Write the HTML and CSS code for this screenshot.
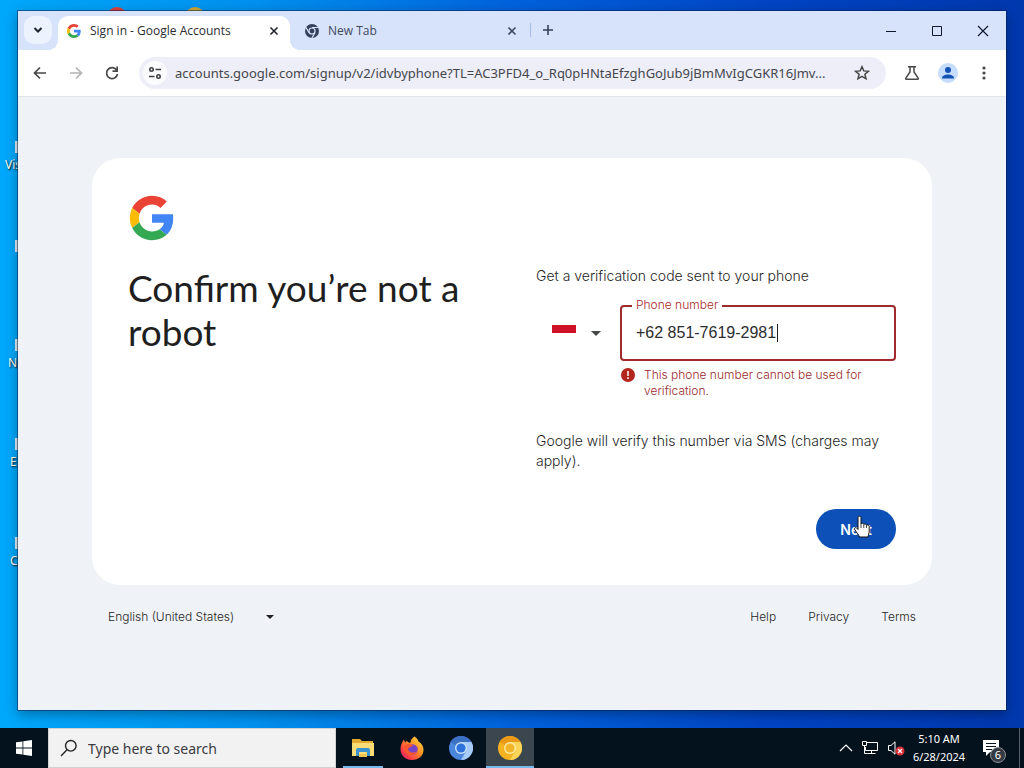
FILE: index.html
```html
<!DOCTYPE html>
<html lang="en">
<head>
  <meta charset="UTF-8">
  <title>Sign in - Google Accounts</title>
  <link rel="stylesheet" href="styles.css">
</head>
<body>

  <!-- Desktop -->
  <div class="desktop">
    <div class="pin pin-red"></div>
    <div class="pin pin-yellow"></div>
    <div class="pin shortcut shortcut-1">Vis</div>
    <div class="pin shortcut shortcut-2"></div>
    <div class="pin shortcut shortcut-3">N</div>
    <div class="pin shortcut shortcut-4">E</div>
    <div class="pin shortcut shortcut-5">C</div>

    <!-- Browser window -->
    <div class="window">
      <div class="tabstrip">
        <button class="tab-search" aria-label="Search tabs">
          <svg width="10" height="10" viewBox="0 0 10 10"><path d="M1.500 3l3.500 3.500L8.500 3" fill="none" stroke="#20242c" stroke-width="2"/></svg>
        </button>
        <div class="tab active">
          <svg width="14" height="14" viewBox="0 0 48 48">
            <path fill="#ea4335" d="M24 9.500c3.540 0 6.710 1.220 9.210 3.600l6.850-6.850C35.900 2.380 30.470 0 24 0 14.620 0 6.510 5.380 2.560 13.220l7.980 6.190C12.430 13.720 17.740 9.500 24 9.500z"/>
            <path fill="#4285f4" d="M46.980 24.550c0-1.570-.15-3.090-.38-4.550H24v9.020h12.940c-.58 2.960-2.260 5.480-4.780 7.180l7.730 6c4.510-4.180 7.090-10.360 7.090-17.650z"/>
            <path fill="#fbbc05" d="M10.530 28.590c-.48-1.450-.76-2.990-.76-4.590s.27-3.140.76-4.590l-7.980-6.190C.92 16.460 0 20.120 0 24c0 3.880.92 7.540 2.560 10.780l7.970-6.190z"/>
            <path fill="#34a853" d="M24 48c6.480 0 11.930-2.130 15.890-5.810l-7.730-6c-2.150 1.450-4.920 2.300-8.160 2.300-6.260 0-11.570-4.220-13.470-9.910l-7.980 6.190C6.510 42.620 14.620 48 24 48z"/>
          </svg>
          <span class="tab-title">Sign in - Google Accounts</span>
          <button class="tab-close" aria-label="Close tab">
            <svg width="10" height="10" viewBox="0 0 10 10"><path d="M1.500 1.500l7 7M8.500 1.500l-7 7" stroke="#20242c" stroke-width="1.600"/></svg>
          </button>
        </div>
        <div class="tab">
          <svg width="14" height="14" viewBox="0 0 24 24">
            <circle cx="12" cy="12" r="12" fill="#35415c"/>
            <circle cx="12" cy="12" r="5.200" fill="#35415c" stroke="#d8e3fb" stroke-width="2"/>
            <path d="M12 6h11M6.800 15L1.500 5.500M17.200 15l-5.500 9" stroke="#d8e3fb" stroke-width="2"/>
          </svg>
          <span class="tab-title">New Tab</span>
          <button class="tab-close" aria-label="Close tab">
            <svg width="10" height="10" viewBox="0 0 10 10"><path d="M1.500 1.500l7 7M8.500 1.500l-7 7" stroke="#3c475e" stroke-width="1.600"/></svg>
          </button>
        </div>
        <button class="new-tab" aria-label="New tab">
          <svg width="12" height="12" viewBox="0 0 12 12"><path d="M6 1v10M1 6h10" stroke="#35415c" stroke-width="1.600"/></svg>
        </button>
        <div class="window-buttons">
          <button aria-label="Minimize"><svg width="12" height="12" viewBox="0 0 12 12"><path d="M1 6.500h10" stroke="#10182c"/></svg></button>
          <button aria-label="Maximize"><svg width="12" height="12" viewBox="0 0 12 12"><path d="M1.500 1.500h9v9h-9z" fill="none" stroke="#10182c"/></svg></button>
          <button aria-label="Close"><svg width="12" height="12" viewBox="0 0 12 12"><path d="M1 1l10 10M11 1L1 11" stroke="#10182c" stroke-width="1.200"/></svg></button>
        </div>
      </div>

      <div class="toolbar">
        <button class="tool" aria-label="Back">
          <svg width="16" height="16" viewBox="0 0 16 16"><path d="M14 8H3M8 2.500L2.500 8 8 13.500" fill="none" stroke="#474747" stroke-width="1.700"/></svg>
        </button>
        <button class="tool" aria-label="Forward">
          <svg width="16" height="16" viewBox="0 0 16 16"><path d="M2 8h11M8 2.500L13.500 8 8 13.500" fill="none" stroke="#b4b4b6" stroke-width="1.700"/></svg>
        </button>
        <button class="tool" aria-label="Reload">
          <svg width="16" height="16" viewBox="0 0 16 16"><path d="M12.800 5.200A5.500 5.500 0 1 0 13.500 9" fill="none" stroke="#474747" stroke-width="1.700"/><path d="M14 1.500V7H8.500V5.300h3.800V1.500z" fill="#474747"/></svg>
        </button>
        <div class="omnibox">
          <button class="site-info" aria-label="View site information">
            <svg width="14" height="14" viewBox="0 0 14 14" fill="none" stroke="#3c3f43" stroke-width="1.600"><circle cx="3.500" cy="3.500" r="1.700"/><path d="M7.500 3.500H13M1 10.500h5.500"/><circle cx="10.500" cy="10.500" r="1.700"/></svg>
          </button>
          <input type="text" class="url" aria-label="Address and search bar" value="accounts.google.com/signup/v2/idvbyphone?TL=AC3PFD4_o_Rq0pHNtaEfzghGoJub9jBmMvIgCGKR16Jmv..." readonly>
          <button class="tool" aria-label="Bookmark this tab">
            <svg width="16" height="16" viewBox="0 0 16 16"><path d="M8 1.700l1.800 4.200 4.600.4-3.500 3 1.100 4.500-4-2.400-4 2.400 1.100-4.500-3.500-3 4.600-.4z" fill="none" stroke="#474747" stroke-width="1.500"/></svg>
          </button>
        </div>
        <button class="tool" aria-label="Experiments">
          <svg width="16" height="16" viewBox="0 0 16 16"><path d="M4 1.800h8M6 2v5L1.800 13.200c-.3.500 0 1 .5 1h11.400c.5 0 .8-.5.5-1L10 7V2" fill="none" stroke="#474747" stroke-width="1.500"/></svg>
        </button>
        <button class="tool" aria-label="Profile">
          <svg width="20" height="20" viewBox="0 0 20 20"><circle cx="10" cy="10" r="10" fill="#c5dcfb"/><circle cx="10" cy="7" r="3" fill="#1451b4"/><path d="M4 15.500c0-3 3-4 6-4s6 1 6 4z" fill="#1451b4"/></svg>
        </button>
        <button class="tool" aria-label="Menu">
          <svg width="16" height="16" viewBox="0 0 16 16" fill="#474747"><circle cx="8" cy="3" r="1.600"/><circle cx="8" cy="8" r="1.600"/><circle cx="8" cy="13" r="1.600"/></svg>
        </button>
      </div>

      <!-- Google sign up page -->
      <div class="page">
        <form class="card">
          <div class="intro">
            <svg class="logo" width="48" height="48" viewBox="-2 -2 52 52">
              <path fill="#ea4335" d="M24 9.500c3.540 0 6.710 1.220 9.210 3.600l6.850-6.850C35.900 2.380 30.470 0 24 0 14.620 0 6.510 5.380 2.560 13.220l7.980 6.190C12.430 13.720 17.740 9.500 24 9.500z"/>
              <path fill="#4285f4" d="M46.980 24.550c0-1.570-.15-3.090-.38-4.550H24v9.020h12.940c-.58 2.960-2.260 5.480-4.780 7.180l7.730 6c4.510-4.180 7.090-10.360 7.090-17.650z"/>
              <path fill="#fbbc05" d="M10.530 28.590c-.48-1.450-.76-2.990-.76-4.590s.27-3.140.76-4.590l-7.980-6.190C.92 16.460 0 20.120 0 24c0 3.880.92 7.540 2.560 10.780l7.970-6.190z"/>
              <path fill="#34a853" d="M24 48c6.480 0 11.930-2.130 15.890-5.810l-7.730-6c-2.150 1.450-4.920 2.300-8.160 2.300-6.260 0-11.570-4.220-13.470-9.910l-7.980 6.190C6.510 42.620 14.620 48 24 48z"/>
            </svg>
            <h1>Confirm you’re not a robot</h1>
          </div>
          <div class="details">
            <p class="lead">Get a verification code sent to your phone</p>
            <div class="phone-row">
              <div class="country">
                <select aria-label="Country">
                  <option>Indonesia</option>
                </select>
                <svg class="flag" width="24" height="16" viewBox="0 0 24 16"><path d="M0 0h24v16H0z" fill="#fff"/><path d="M0 0h24v8H0z" fill="#ce1126"/></svg>
                <svg class="arrow" width="10" height="5" viewBox="0 0 10 5"><path d="M0 0h10L5 5z" fill="#444746"/></svg>
              </div>
              <div class="phone">
                <div class="phone-box">
                  <label for="phone">Phone number</label>
                  <input type="tel" id="phone" value="+62 851-7619-2981">
                  <span class="caret"></span>
                </div>
                <div class="error">
                  <svg width="16" height="16" viewBox="0 0 16 16"><circle cx="8" cy="8" r="7" fill="#b3261e"/><path d="M8 4v5M8 10.300v1.700" stroke="#fff" stroke-width="1.500"/></svg>
                  <span>This phone number cannot be used for verification.</span>
                </div>
              </div>
            </div>
            <p class="note">Google will verify this number via SMS (charges may apply).</p>
            <button type="button" class="btn-next">Next</button>
          </div>
        </form>

        <div class="footer">
          <div class="language">
            <select aria-label="Language">
              <option>English (United States)</option>
            </select>
            <svg class="arrow" width="8" height="4" viewBox="0 0 8 4"><path d="M0 0h8L4 4z" fill="#1f1f1f"/></svg>
          </div>
          <div class="links">
            <a href="#">Help</a>
            <a href="#">Privacy</a>
            <a href="#">Terms</a>
          </div>
        </div>
      </div>
    </div>

    <!-- Mouse pointer -->
    <svg class="cursor" width="18" height="24" viewBox="0 0 18 24"><path d="M5 2.500C5 .8 8 .8 8 2.500V9c.3-1.200 2.700-1 2.800.5.500-1 2.600-.7 2.700.8.600-.8 2.700-.5 2.700 1.200V17c0 2-1.200 3-1.200 5H6.500c-.5-2-3-4.500-4.800-7.500-.8-1.500 1-2.500 2-1.500L5 14.500z" fill="#fff" stroke="#111" stroke-width="1"/><path d="M8 9v4M10.800 10v3M13.500 10.500V13" stroke="#111" stroke-width=".8"/></svg>
  </div>

  <!-- Taskbar -->
  <div class="taskbar">
    <button class="start" aria-label="Start">
      <svg width="16" height="16" viewBox="0 0 16 16" fill="#fff"><path d="M0 2.300L6.500 1.400v6.200H0zM7.300 1.300L16 0v7.600H7.300zM0 8.400h6.500v6.200L0 13.700zM7.300 8.400H16V16l-8.700-1.300z"/></svg>
    </button>
    <div class="search">
      <svg width="18" height="18" viewBox="0 0 18 18" fill="none" stroke="#222" stroke-width="1.400"><circle cx="10.800" cy="6.800" r="5.300"/><path d="M7 10.800L1 17"/></svg>
      <input type="text" aria-label="Search" placeholder="Type here to search">
    </div>
    <div class="apps">
      <button class="app open" aria-label="File Explorer">
        <svg width="24" height="24" viewBox="0 0 24 24"><path d="M1 3h8l2 2h11v15H1z" fill="#e3ab2f"/><path d="M1 7h22v13H1z" fill="#fbdc77"/><path d="M5 20v-6q0-2 2-2h10q2 0 2 2v6h-3v-4H8v4z" fill="#3b94cf"/><path d="M8 18h8v3H8z" fill="#f0c453"/></svg>
      </button>
      <button class="app" aria-label="Firefox">
        <svg width="24" height="24" viewBox="0 0 24 24">
          <defs><linearGradient id="fox" x1="1" y1="0" x2="0" y2="1"><stop offset="0" stop-color="#ffe94a"/><stop offset=".4" stop-color="#ff9524"/><stop offset=".75" stop-color="#fb3c48"/><stop offset="1" stop-color="#dd1d7b"/></linearGradient></defs>
          <path d="M14.500.5c3 2 3.500 3.700 4 5 3 1.500 5 5 5 8.300C23.500 20 18.500 24 12 24S.5 19.500.5 13C.5 9.500 2 6 4 3.500L5 6.500l2-1.800c.5 1.500 1.800 2 3.500 2 0-2.700 1.500-4.700 4-6.200z" fill="url(#fox)"/>
          <circle cx="12.500" cy="13.500" r="5.200" fill="#7744c9"/><path d="M4 10c3-3 7-2.500 9.500 0-2.500 0-3.500 1.500-5.500 2.500.5 4 5 5.500 9 2.500-1.500 5-9.500 6-12.500 0-1-2-1-3.500-.5-5z" fill="#f9572e"/>
        </svg>
      </button>
      <button class="app" aria-label="Chromium">
        <svg width="24" height="24" viewBox="0 0 24 24"><circle cx="12" cy="12" r="12" fill="#4a86dc"/><path d="M12 6h10.400A12 12 0 0 1 12 24l5.200-9z" fill="#a7cbfa"/><path d="M1.600 6A12 12 0 0 1 22.400 6H12l-5.200 3z" fill="#3b70c4"/><circle cx="12" cy="12" r="6" fill="#c9dffc"/><circle cx="12" cy="12" r="4.600" fill="#2e72dc"/></svg>
      </button>
      <button class="app open current" aria-label="Chrome Canary">
        <svg width="24" height="24" viewBox="0 0 24 24"><circle cx="12" cy="12" r="12" fill="#f5b321"/><path d="M12 6h10.400A12 12 0 0 1 12 24l5.200-9z" fill="#fbd557"/><path d="M1.600 6A12 12 0 0 1 22.400 6H12l-5.200 3z" fill="#ea9a17"/><circle cx="12" cy="12" r="6" fill="#fdeaa5"/><circle cx="12" cy="12" r="4.600" fill="#f2b52a"/></svg>
      </button>
    </div>
    <div class="tray">
      <svg width="14" height="14" viewBox="0 0 14 14"><path d="M1 10l6-6 6 6" fill="none" stroke="#fff" stroke-width="1.200"/></svg>
      <svg width="18" height="16" viewBox="0 0 18 16" fill="none" stroke="#fff"><path d="M5.500 2.500h11v8H4.500V7M10.500 10.500v3M6.500 13.500h8M1.500 1.500h4v4h-4zM3.500 5.500v8h3"/></svg>
      <svg width="18" height="16" viewBox="0 0 18 16"><path d="M1.500 5.500H4l4-3.700v12.400l-4-3.700H1.500z" fill="none" stroke="#fff"/><circle cx="13" cy="11" r="4.500" fill="#d93036"/><path d="M11 9l4 4M15 9l-4 4" stroke="#fff" stroke-width="1.200"/></svg>
      <div class="clock">
        <span>5:10 AM</span>
        <span>6/28/2024</span>
      </div>
      <div class="notifications">
        <svg width="16" height="16" viewBox="0 0 16 16"><path d="M0 0h16v12H7l-4 4v-4H0z" fill="#fff"/><path d="M3 3.500h10M3 6.500h10M3 9.500h6" stroke="#0a1320"/></svg>
        <span class="badge">6</span>
      </div>
      <div class="show-desktop"></div>
    </div>
  </div>

</body>
</html>
```
FILE: styles.css
```css
* {
  box-sizing: border-box;
}
body {
  font-family: Inter, Arial, sans-serif;
  display: flex;
  flex-direction: column;
  min-height: 100vh;
  margin: 0;
  color: #1f1f1f;
}
button {
  display: flex;
  align-items: center;
  justify-content: center;
  padding: 0;
  border: none;
  background: none;
  cursor: pointer;
}
input, select {
  border: none;
  outline: none;
  background: none;
  font-family: inherit;
}
svg {
  display: block;
  flex-shrink: 0;
}

/* Desktop */
.desktop {
  position: relative;
  flex: 1;
  display: flex;
  padding: 11px 18px 18px;
  background: linear-gradient(to right, #00a8fb, #0090ee 25%, #0062dc 50%, #0044c4 75%, #0038ae);
  overflow: hidden;
}
.pin {
  position: absolute;
}
.pin-red, .pin-yellow {
  top: 7px;
  left: 107px;
  width: 20px;
  height: 20px;
  border-radius: 50%;
  background: #e0403c;
}
.pin-yellow {
  left: 185px;
  background: #d0a437;
}
.shortcut {
  left: 8px;
  width: 40px;
  height: 32px;
  padding-top: 16px;
  font-family: "Noto Sans", sans-serif;
  font-size: 12px;
  line-height: 16px;
  color: #fff;
  text-shadow: 1px 1px 2px #000;
}
.shortcut::before {
  content: "";
  position: absolute;
  top: 0;
  left: 7px;
  width: 8px;
  height: 12px;
  background: #e4eef6;
}
.shortcut-1 {
  top: 141px;
  left: 5px;
}
.shortcut-1::before {
  left: 10px;
}
.shortcut-2 {
  top: 240px;
}
.shortcut-3 {
  top: 339px;
}
.shortcut-4 {
  top: 438px;
  left: 10px;
}
.shortcut-5 {
  top: 537px;
  left: 10px;
}
.shortcut-4::before, .shortcut-5::before {
  left: 5px;
}

/* Browser window */
.window {
  position: relative;
  flex: 1;
  display: flex;
  flex-direction: column;
  min-width: 0;
  background: #fff;
  box-shadow: 0 0 0 1px rgba(0, 30, 70, 0.5), 0 4px 12px rgba(0, 0, 0, 0.35);
  font-family: "Open Sans", sans-serif;
}
.tabstrip {
  display: flex;
  height: 39px;
  padding-left: 6px;
  background: #d7e3fb;
}
.tab-search {
  width: 28px;
  height: 28px;
  margin: 5px 6px 0 0;
  border-radius: 10px;
  background: #ecf2fe;
}
.tab {
  position: relative;
  display: flex;
  align-items: center;
  gap: 9px;
  width: 232px;
  height: 34px;
  margin-top: 5px;
  padding: 0 11px 5px 9px;
  font-size: 12px;
  color: #3f4a60;
}
.tab + .tab {
  width: 241px;
  padding-left: 15px;
  padding-right: 14px;
}
.tab + .tab::after {
  content: "";
  position: absolute;
  right: 0;
  top: 7px;
  width: 1px;
  height: 14px;
  background: #a5bce8;
}
.tab.active {
  border-radius: 10px 10px 0 0;
  background: #fff;
  color: #2a2d33;
}
.tab.active::before, .tab.active::after {
  content: "";
  position: absolute;
  bottom: 0;
  width: 10px;
  height: 10px;
}
.tab.active::before {
  left: -10px;
  background: radial-gradient(circle at 0 0, transparent 10px, #fff 10px);
}
.tab.active::after {
  right: -10px;
  background: radial-gradient(circle at 100% 0, transparent 10px, #fff 10px);
}
.tab-title {
  flex: 1;
  white-space: nowrap;
}
.new-tab {
  width: 28px;
  height: 28px;
  margin: 5px 0 0 3px;
}
.window-buttons {
  display: flex;
  margin-left: auto;
}
.window-buttons button {
  width: 46px;
}

.toolbar {
  display: flex;
  align-items: center;
  gap: 8px;
  height: 47px;
  padding: 0 8px;
  border-bottom: 1px solid #e2e5ea;
}
.tool {
  width: 28px;
  height: 28px;
  flex-shrink: 0;
}
.omnibox {
  flex: 1;
  display: flex;
  align-items: center;
  min-width: 0;
  height: 32px;
  margin: 0 4px 0 5px;
  padding: 0 10px 0 4px;
  border-radius: 16px;
  background: #eeeef8;
}
.site-info {
  width: 24px;
  height: 24px;
  border-radius: 50%;
  background: #fcfcff;
}
.url {
  flex: 1;
  min-width: 0;
  padding: 0 0 0 8px;
  font-family: "Noto Sans", sans-serif;
  font-size: 13px;
  color: #44474c;
}

/* Sign up page */
.page {
  flex: 1;
  padding: 61px 40px 40px;
  background: #eff3f8;
  font-family: Inter, Arial, sans-serif;
}
.card {
  display: grid;
  grid-template-columns: 1fr 1fr;
  gap: 48px;
  max-width: 840px;
  margin: 0 auto;
  padding: 36px;
  border-radius: 28px;
  background: #fff;
}
h1 {
  margin: 24px 0 0;
  font-family: Lato, sans-serif;
  font-size: 37px;
  font-weight: 400;
  line-height: 44px;
}
.details {
  display: flex;
  flex-direction: column;
  padding-top: 72px;
}
.lead, .note {
  margin: 0;
  font-size: 14px;
  font-weight: 300;
  line-height: 20px;
  color: #1f1f1f;
}
.phone-row {
  display: flex;
  gap: 8px;
  margin: 19px 0 32px;
}
.country {
  position: relative;
  width: 76px;
  height: 56px;
}
.country select {
  appearance: none;
  width: 100%;
  height: 100%;
  color: transparent;
}
.country .flag {
  position: absolute;
  top: 20px;
  left: 16px;
  pointer-events: none;
}
.country .arrow {
  position: absolute;
  top: 26px;
  right: 11px;
  pointer-events: none;
}
.phone {
  flex: 1;
}
.phone-box {
  position: relative;
  height: 56px;
  border: 2px solid #9f2a2c;
  border-radius: 4px;
}
.phone-box label {
  position: absolute;
  top: -10px;
  left: 10px;
  padding: 0 4px;
  background: #fff;
  font-size: 12px;
  font-weight: 300;
  line-height: 16px;
  color: #a82a28;
}
.phone-box input {
  width: 100%;
  height: 100%;
  padding: 0 14px;
  font-family: "Liberation Sans", Arial, sans-serif;
  font-size: 16px;
  color: #2c2d2f;
}
.caret {
  position: absolute;
  top: 17px;
  left: 155px;
  width: 1px;
  height: 18px;
  background: #1f1f1f;
}
.error {
  display: flex;
  gap: 8px;
  padding-top: 6px;
  font-size: 12px;
  font-weight: 300;
  line-height: 16px;
  color: #9a2a2c;
}
.btn-next {
  align-self: flex-end;
  height: 40px;
  margin-top: 38px;
  padding: 0 24px;
  border-radius: 20px;
  background: #0c50b8;
  color: #fff;
  font-family: inherit;
  font-size: 14px;
  font-weight: 600;
}
.footer {
  display: flex;
  justify-content: space-between;
  align-items: center;
  max-width: 840px;
  margin: 0 auto;
  padding: 24px 16px;
  font-size: 12px;
  font-weight: 300;
  line-height: 16px;
}
.language {
  position: relative;
  width: 168px;
}
.language select {
  appearance: none;
  width: 100%;
  padding: 0;
  font-size: 12px;
  font-weight: 300;
  line-height: 16px;
  color: #1f1f1f;
}
.language .arrow {
  position: absolute;
  top: 6px;
  right: 2px;
  pointer-events: none;
}
.links {
  display: flex;
  gap: 32px;
}
.links a {
  color: #1f1f1f;
  text-decoration: none;
}
.cursor {
  position: absolute;
  top: 515px;
  left: 853px;
}

/* Taskbar */
.taskbar {
  display: flex;
  height: 40px;
  background: #04121e;
  font-family: "Noto Sans", sans-serif;
}
.start {
  width: 48px;
}
.search {
  display: flex;
  align-items: center;
  gap: 10px;
  width: 288px;
  padding: 0 11px;
  border: 1px solid #d0d2d4;
  background: #f2f2f3;
}
.search input {
  flex: 1;
  min-width: 0;
  padding: 0;
  font-size: 14px;
}
.search input::placeholder {
  color: #3b3b3d;
  opacity: 1;
}
.apps {
  display: flex;
  gap: 1px;
  margin-left: 3px;
}
.app {
  position: relative;
  width: 48px;
}
.app.open::after {
  content: "";
  position: absolute;
  right: 4px;
  bottom: 0;
  left: 4px;
  height: 2px;
  background: #76b9ed;
}
.app.current {
  background: #3c464e;
}
.app.current::after {
  right: 0;
  left: 0;
}
.tray {
  display: flex;
  align-items: center;
  gap: 8px;
  margin-left: auto;
  color: #fff;
}
.clock {
  display: flex;
  flex-direction: column;
  align-items: center;
  width: 52px;
  font-size: 11px;
  line-height: 18px;
}
.notifications {
  position: relative;
  margin-left: 10px;
}
.badge {
  position: absolute;
  top: 7px;
  left: 7px;
  width: 16px;
  height: 16px;
  border: 1px solid #8a9096;
  border-radius: 50%;
  background: #343b42;
  font-size: 11px;
  line-height: 14px;
  text-align: center;
}
.show-desktop {
  width: 5px;
  height: 40px;
  margin-left: 12px;
  border-left: 1px solid #55606a;
}
```
